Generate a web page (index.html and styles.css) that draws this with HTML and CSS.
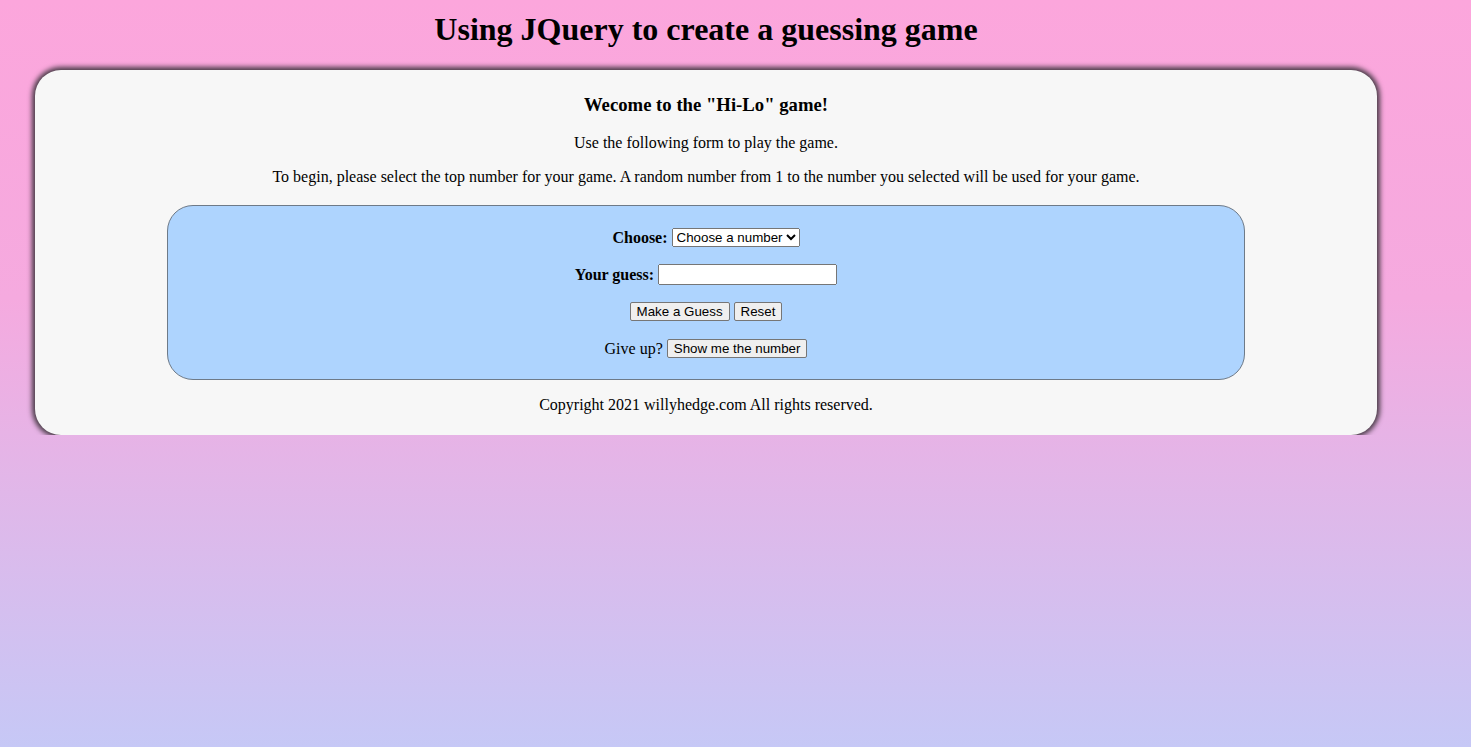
FILE: index.html
```html
<!DOCTYPE html>
<html>
<head>
<meta charset="utf-8">
<title>Hi-Lo</title>
<link rel="stylesheet" href="styles.css">
</head>
<body>
<div class="wrap">
  <h1 class="title">Using JQuery to create a guessing game</h1>
  <div class="card">
    <h3 class="welcome">Wecome to the "Hi-Lo" game!</h3>
    <p class="text">Use the following form to play the game.</p>
    <p class="text">To begin, please select the top number for your game. A random number from 1 to the number you selected will be used for your game.</p>
    <form class="game">
      <div class="row">
        <label class="lbl">Choose:</label>
        <select class="sel"><option>Choose a number</option></select>
      </div>
      <div class="row">
        <label class="lbl">Your guess:</label>
        <input class="inp" type="text">
      </div>
      <div class="row">
        <button type="button" class="btn">Make a Guess</button>
        <button type="button" class="btn">Reset</button>
      </div>
      <div class="row">
        <span class="plain">Give up?</span>
        <button type="button" class="btn">Show me the number</button>
      </div>
    </form>
    <p class="text copy">Copyright 2021 willyhedge.com All rights reserved.</p>
  </div>
</div>
</body>
</html>
```

FILE: styles.css
```css
html {
  min-height: 100%;
  background: linear-gradient(to bottom, #fca6dc 0%, #f5aadf 40%, #c6c8f6 100%);
}
body {
  margin: 0;
  font-family: "Liberation Serif", "Times New Roman", serif;
  color: #000;
}
.wrap {
  width: 1396px;
  margin-left: 8px;
  padding-top: 1px;
}
.title {
  font-size: 32px;
  font-weight: bold;
  text-align: center;
  line-height: 37px;
  margin: 10px 0 22px;
}
.card {
  margin: 0 27px;
  background: #f7f7f7;
  border-radius: 26px;
  box-shadow: 0 0 5px 3px #4a3c48;
  padding: 1px 0 4px;
  text-align: center;
}
.welcome {
  font-size: 18.72px;
  line-height: 21.5px;
  margin: 23px 0 18px;
}
.text {
  font-size: 16px;
  line-height: 18.4px;
  margin: 0 0 16px;
}
.game {
  width: 80.35%;
  margin: 19px auto 16px;
  background: #aed4fe;
  border: 1px solid #6e7a88;
  border-radius: 26px;
  padding: 21px 0 4px;
  box-sizing: border-box;
}
.row {
  margin-bottom: 16px;
  height: 21px;
  font-size: 16px;
  display: flex;
  justify-content: center;
  align-items: center;
  gap: 4px;
}
.lbl {
  font-weight: bold;
}
.sel {
  font-family: "Liberation Sans", Arial, sans-serif;
  font-size: 13.33px;
}
.inp {
  width: 171px;
  height: 15px;
  font-size: 13.33px;
}
.btn {
  font-family: "Liberation Sans", Arial, sans-serif;
  font-size: 13.33px;
  padding: 1px 6px;
  background: #efefef;
  border: 1px solid #767676;
  border-radius: 2px;
  color: #000;
}
.copy {
  margin-bottom: 16px;
}
```
